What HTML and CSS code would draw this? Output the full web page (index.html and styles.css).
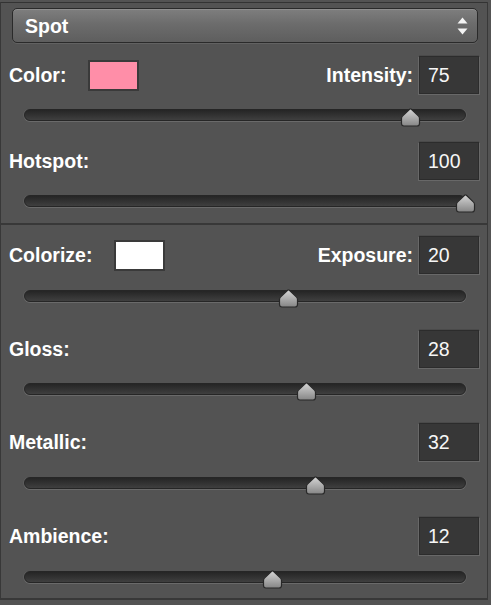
FILE: index.html
```html
<!DOCTYPE html>
<html>
<head>
<meta charset="utf-8">
<link rel="stylesheet" href="styles.css">
</head>
<body>
<div class="window">
  <section class="group g1">
    <div class="select">
      <span class="select-text">Spot</span>
      <svg class="select-arrows" width="11" height="18" viewBox="0 0 11 18">
        <path d="M5.5 0.5 L10.5 6.5 L0.5 6.5 Z" fill="#f4f4f4"/>
        <path d="M0.5 11.5 L10.5 11.5 L5.5 17.5 Z" fill="#f4f4f4"/>
      </svg>
    </div>

    <div class="row">
      <span class="label">Color:</span>
      <span class="swatch pink"></span>
      <span class="spacer"></span>
      <span class="label">Intensity:</span>
      <span class="num">75</span>
    </div>
    <div class="slider"><span class="thumb" style="left:375px"></span></div>

    <div class="row r2">
      <span class="label">Hotspot:</span>
      <span class="spacer"></span>
      <span class="num">100</span>
    </div>
    <div class="slider"><span class="thumb" style="left:430px"></span></div>
  </section>

  <section class="group g2">
    <div class="row">
      <span class="label">Colorize:</span>
      <span class="swatch white"></span>
      <span class="spacer"></span>
      <span class="label">Exposure:</span>
      <span class="num">20</span>
    </div>
    <div class="slider s2"><span class="thumb" style="left:253px"></span></div>

    <div class="row">
      <span class="label">Gloss:</span>
      <span class="spacer"></span>
      <span class="num">28</span>
    </div>
    <div class="slider"><span class="thumb" style="left:271px"></span></div>

    <div class="row">
      <span class="label">Metallic:</span>
      <span class="spacer"></span>
      <span class="num">32</span>
    </div>
    <div class="slider s2"><span class="thumb" style="left:280px"></span></div>

    <div class="row">
      <span class="label">Ambience:</span>
      <span class="spacer"></span>
      <span class="num">12</span>
    </div>
    <div class="slider s2"><span class="thumb" style="left:237px"></span></div>
  </section>
</div>
</body>
</html>
```

FILE: styles.css
```css
html, body {
  margin: 0;
  padding: 0;
  background: #535353;
}
body {
  width: 491px;
  height: 605px;
  overflow: hidden;
  font-family: "Liberation Sans", Arial, Helvetica, sans-serif;
  color: #ffffff;
}
.window {
  margin-top: 2px;
  width: 488px;
  box-sizing: border-box;
  border-left: 1px solid #383838;
  border-right: 1px solid #383838;
}
.group {
  display: flex;
  flex-direction: column;
}
.g1 {
  border-top: 1px solid #333333;
  padding-bottom: 16px;
}
.g2 {
  border-top: 2px solid #383838;
  border-bottom: 2px solid #383838;
  padding-bottom: 15px;
}

/* dropdown */
.select {
  margin: 5px 0 0 11px;
  width: 466px;
  height: 35px;
  box-sizing: border-box;
  border: 1.5px solid #2a2a2a;
  border-radius: 5px;
  background: linear-gradient(to bottom, #7e7e7e 0%, #6c6c6c 45%, #5e5e5e 100%);
  box-shadow: inset 0 1px 0 #8e8e8e, 0 1px 0 #626262;
  display: flex;
  align-items: center;
  padding: 0 9px 0 12px;
}
.select-text {
  flex: 1;
  font-size: 19.5px;
  font-weight: bold;
  line-height: 22px;
  margin-top: 1px;
}
.select-arrows {
  display: block;
  margin-top: 1px;
}

/* rows */
.row {
  display: flex;
  align-items: center;
  height: 38px;
  padding: 0 8px 0 8px;
  margin-top: 28px;
}
.g1 .row {
  margin-top: 13px;
}
.g1 .row.r2 {
  margin-top: 21px;
}
.g2 .row:first-child {
  margin-top: 11px;
}
.label {
  font-size: 19.5px;
  font-weight: bold;
  line-height: 22px;
  white-space: nowrap;
}
.spacer {
  flex: 1;
}
.swatch {
  width: 51px;
  height: 31px;
  box-sizing: border-box;
  border: 2px solid #3a3a3a;
  margin-left: 22px;
}
.pink { background: #ff8ea8; }
.white { background: #ffffff; }

.num {
  margin-left: 6px;
  width: 60px;
  height: 38px;
  box-sizing: border-box;
  background: #373737;
  border: 1px solid #2c2c2c;
  box-shadow: -1px 1px 0 #686868, 1px 1px 0 #686868, 0 -1px 0 #4a4a4a;
  font-size: 19.5px;
  line-height: 36px;
  padding-left: 8px;
  color: #f6f6f6;
}

/* sliders */
.slider {
  position: relative;
  margin: 15px 0 0 23px;
  width: 442px;
  height: 12px;
  box-sizing: border-box;
  border: 1px solid #262626;
  border-radius: 6px;
  background: linear-gradient(to bottom, #252525 0%, #2e2e2e 35%, #3f3f3f 100%);
  box-shadow: 0 1px 0 #6a6a6a, -1px 0 0 #5e5e5e, 1px 0 0 #5e5e5e;
}
.slider.s2 {
  margin-top: 16px;
}
.thumb {
  position: absolute;
  top: -2px;
  width: 21px;
  height: 19px;
  background: url("data:image/svg+xml;utf8,<svg xmlns='http://www.w3.org/2000/svg' width='21' height='19' viewBox='0 0 21 19'><defs><linearGradient id='g' x1='0' y1='0' x2='0' y2='1'><stop offset='0' stop-color='%23d6d6d6'/><stop offset='1' stop-color='%23858585'/></linearGradient></defs><path d='M9.6 1.3 Q10.5 0.4 11.4 1.3 L18 7.6 Q19.5 8.8 19.5 10.5 L19.5 15.5 Q19.5 18 17 18 L4 18 Q1.5 18 1.5 15.5 L1.5 10.5 Q1.5 8.8 3 7.6 Z' fill='url(%23g)' stroke='%23282828' stroke-width='1.2'/></svg>") no-repeat;
}
```
